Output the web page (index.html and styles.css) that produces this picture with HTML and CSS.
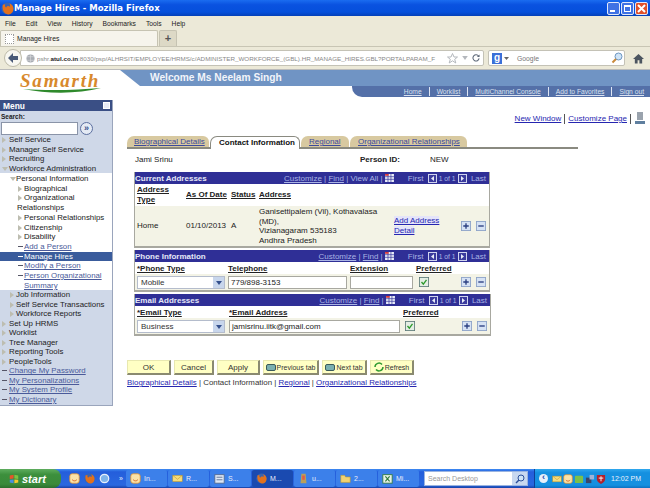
FILE: index.html
```html
<!DOCTYPE html>
<html lang="en">
<head>
    <meta charset="UTF-8">
    <title>Manage Hires - Mozilla Firefox</title>
    <link rel="stylesheet" href="styles.css">
</head>
<body>
<svg class="defs" width="0" height="0">
    <symbol id="fox" viewBox="0 0 14 14">
        <circle cx="7" cy="7" r="6.5" fill="#3a64b0"/>
        <path d="M2 3C1 8 3 13 8 13.4C12 13.4 14 9.5 13.3 6C12.8 3.5 11 2 9 1.5C10 3 10 4 9.5 5C8 3.8 6 4.5 5.5 6C4.5 5.5 4 4 4.5 2.5C3.5 2.8 2.5 3 2 3Z" fill="#e2711d"/>
    </symbol>
    <symbol id="smile" viewBox="0 0 14 14">
        <rect x="1" y="1" width="12" height="12" rx="3" fill="#fbe3a8" stroke="#e0902c"/>
        <path d="M4 8.5C5.5 10.5 8.5 10.5 10 8.5" fill="none" stroke="#d9661f" stroke-width="1.2"/>
    </symbol>
    <symbol id="plus" viewBox="0 0 11 11">
        <rect x="0.5" y="0.5" width="10" height="10" fill="#d6e2f4" stroke="#8ea4c8"/>
        <path d="M2.5 5.5H8.5M5.5 2.5V8.5" stroke="#2b3f80" stroke-width="1.5"/>
    </symbol>
    <symbol id="minus" viewBox="0 0 11 11">
        <rect x="0.5" y="0.5" width="10" height="10" fill="#d6e2f4" stroke="#8ea4c8"/>
        <path d="M2.5 5.5H8.5" stroke="#2b3f80" stroke-width="1.5"/>
    </symbol>
    <symbol id="prev" viewBox="0 0 9 9">
        <rect x="0.5" y="0.5" width="8" height="8" fill="#3b3b9e" stroke="#d0d4ee"/>
        <path d="M6 2V7L3 4.5Z" fill="#e8ecf8"/>
    </symbol>
    <symbol id="next" viewBox="0 0 9 9">
        <rect x="0.5" y="0.5" width="8" height="8" fill="#3b3b9e" stroke="#d0d4ee"/>
        <path d="M3 2V7L6 4.5Z" fill="#e8ecf8"/>
    </symbol>
    <symbol id="sheet" viewBox="0 0 10 9">
        <rect width="10" height="9" fill="#e8ecf8"/>
        <path d="M0 3H10M0 6H10M3.3 0V9M6.6 0V9" stroke="#3b3b9e" stroke-width="0.8"/>
        <rect width="4" height="2" fill="#d83a3a"/>
    </symbol>
    <symbol id="check" viewBox="0 0 12 12">
        <rect x="0.5" y="0.5" width="11" height="11" fill="#e4eee4" stroke="#5c7a78"/>
        <path d="M3 6L5.2 8.5L9 3.5" fill="none" stroke="#2c9a2c" stroke-width="1.6"/>
    </symbol>
    <symbol id="folder" viewBox="0 0 14 14">
        <path d="M1 3H6L7 5H13V12H1Z" fill="#f1d271" stroke="#b8962e" stroke-width="0.7"/>
    </symbol>
    <symbol id="mail" viewBox="0 0 14 14">
        <rect x="1" y="3" width="12" height="8" fill="#f7dc7c" stroke="#b8962e" stroke-width="0.7"/>
        <path d="M1 3L7 8L13 3" fill="none" stroke="#b8962e" stroke-width="0.7"/>
    </symbol>
</svg>

<div class="titlebar">
    <svg class="title-icon" width="13" height="13"><use href="#fox"/></svg>
    <span class="title-text">Manage Hires - Mozilla Firefox</span>
    <div class="win-btns">
        <span class="win-btn"><i class="win-min"></i></span>
        <span class="win-btn"><i class="win-max"></i></span>
        <span class="win-btn win-close">
            <svg width="9" height="9" viewBox="0 0 9 9"><path d="M1 1L8 8M8 1L1 8" stroke="#fff" stroke-width="2"/></svg>
        </span>
    </div>
</div>

<div class="menubar">
    <span>File</span><span>Edit</span><span>View</span><span>History</span><span>Bookmarks</span><span>Tools</span><span>Help</span>
</div>

<div class="tabstrip">
    <div class="ff-tab"><i class="ff-favicon"></i>Manage Hires</div>
    <div class="ff-newtab">+</div>
</div>

<div class="navbar">
    <span class="back-btn">
        <svg width="12" height="12" viewBox="0 0 12 12"><path d="M6 1L1 6L6 11V8H11V4H6Z" fill="#4a5a78"/></svg>
    </span>
    <div class="urlbar">
        <svg class="globe" width="9" height="9" viewBox="0 0 10 10"><circle cx="5" cy="5" r="4.5" fill="#a9adb3"/><path d="M1 3H9M1 7H9M5 .5V9.5" stroke="#d7d9dc" stroke-width="0.7"/></svg>
        <span class="url"><span class="url-dim">pshr.</span><b>atul.co.in</b><span class="url-dim">:8030/psp/ALHRSIT/EMPLOYEE/HRMS/c/ADMINISTER_WORKFORCE_(GBL).HR_MANAGE_HIRES.GBL?PORTALPARAM_F</span></span>
        <span class="url-tools">
            <svg width="11" height="11" viewBox="0 0 11 11"><path d="M5.5 .5L7 4H10.5L7.7 6.3L8.8 10L5.5 7.8L2.2 10L3.3 6.3L.5 4H4Z" fill="none" stroke="#b4b8bd"/></svg>
            <svg width="6" height="4" viewBox="0 0 7 5"><path d="M0 0H7L3.5 5Z" fill="#b4b8bd"/></svg>
            <svg width="8" height="8" viewBox="0 0 9 9"><path d="M7.5 2.5A3.5 3.5 0 1 0 8 5" fill="none" stroke="#5d6878" stroke-width="1.2"/><path d="M8.5 .5V3.5H5.5Z" fill="#5d6878"/></svg>
        </span>
    </div>
    <div class="searchbar">
        <span class="g-icon">g</span>
        <svg width="5" height="3" viewBox="0 0 5 3"><path d="M0 0H5L2.5 3Z" fill="#666"/></svg>
        <span class="search-text">Google</span>
        <svg class="lens" width="12" height="12" viewBox="0 0 12 12"><circle cx="7.5" cy="4.5" r="3.5" fill="#cfe4f7" stroke="#6d96c2"/><path d="M5 7L1.5 10.5" stroke="#c98a3a" stroke-width="2"/></svg>
    </div>
    <svg class="home" width="11" height="11" viewBox="0 0 12 12"><path d="M6 1L0 6.5H2V11.5H5V8H7V11.5H10V6.5H12Z" fill="#4c5560"/></svg>
</div>

<div class="portal">
    <div class="banner">
        <div class="logo">
            <span class="logo-name">Samarth</span>
            <svg class="logo-swoosh" width="78" height="6" viewBox="0 0 78 6"><path d="M0 1C25 6 55 6 78 0C55 2 25 3 0 1Z" fill="#2f8a2c"/></svg>
        </div>
        <div class="banner-right">
            <div class="welcome">Welcome Ms Neelam Singh</div>
            <div class="toplinks">
                <a>Home</a><i></i><a>Worklist</a><i></i><a>MultiChannel Console</a><i></i><a>Add to Favorites</a><i></i><a>Sign out</a>
            </div>
        </div>
    </div>

    <div class="portal-body">
        <div class="side">
            <div class="side-head">Menu<i class="side-close"></i></div>
            <div class="side-search">
                <b>Search:</b>
                <div class="search-row"><span class="side-input"></span><span class="go-btn">&raquo;</span></div>
            </div>
            <ul class="tree">
                <li class="closed">Self Service</li>
                <li class="closed">Manager Self Service</li>
                <li class="closed">Recruiting</li>
                <li class="open">Workforce Administration</li>
            </ul>
            <ul class="tree sub">
                <li class="open lv1">Personal Information</li>
                <li class="closed lv2">Biographical</li>
                <li class="closed lv2 hang">Organizational<br>Relationships</li>
                <li class="closed lv2">Personal Relationships</li>
                <li class="closed lv2">Citizenship</li>
                <li class="closed lv2">Disability</li>
                <li class="leaf lv2"><a>Add a Person</a></li>
                <li class="leaf lv2 current">Manage Hires</li>
                <li class="leaf lv2"><a>Modify a Person</a></li>
                <li class="leaf lv2"><a>Person Organizational<br>Summary</a></li>
            </ul>
            <ul class="tree">
                <li class="closed lv1">Job Information</li>
                <li class="closed lv1">Self Service Transactions</li>
                <li class="closed lv1">Workforce Reports</li>
                <li class="closed">Set Up HRMS</li>
                <li class="closed">Worklist</li>
                <li class="closed">Tree Manager</li>
                <li class="closed">Reporting Tools</li>
                <li class="closed">PeopleTools</li>
                <li class="leaf"><a>Change My Password</a></li>
                <li class="leaf"><a>My Personalizations</a></li>
                <li class="leaf"><a>My System Profile</a></li>
                <li class="leaf"><a>My Dictionary</a></li>
            </ul>
        </div>

        <div class="content">
            <div class="page-links">
                <a>New Window</a><i></i><a>Customize Page</a><i></i>
                <svg width="10" height="13" viewBox="0 0 10 13"><rect x="2" y="0" width="6" height="8" fill="#9aa3ad"/><rect x="0" y="9" width="10" height="3" fill="#5f7f9f"/></svg>
            </div>

            <div class="tabs">
                <span class="tab tab-first"><a>Biographical Details</a></span>
                <span class="tab tab-on">Contact Information</span>
                <span class="tab tab-reg"><a>Regional</a></span>
                <span class="tab tab-org"><a>Organizational Relationships</a></span>
            </div>

            <div class="person">
                <span class="person-name">Jami Srinu</span>
                <b class="person-label">Person ID:</b>
                <span>NEW</span>
            </div>

            <div class="grid grid-addr">
                <div class="grid-head">
                    <b>Current Addresses</b>
                    <span class="grid-nav"><a>Customize</a> | <a>Find</a> | View All | <svg width="9" height="8"><use href="#sheet"/></svg>
                        <span class="pager">First <svg width="9" height="9"><use href="#prev"/></svg> <small>1 of 1</small> <svg width="9" height="9"><use href="#next"/></svg> Last</span></span>
                </div>
                <div class="addr-labels">
                    <b class="col-type">Address<br>Type</b>
                    <b class="col-date">As Of Date</b>
                    <b class="col-status">Status</b>
                    <b class="col-addr">Address</b>
                </div>
                <div class="addr-row">
                    <span class="col-type">Home</span>
                    <span class="col-date">01/10/2013</span>
                    <span class="col-status">A</span>
                    <span class="col-addr">Ganisettipalem (Vil), Kothavalasa (MD),<br>Vizianagaram 535183<br>Andhra Pradesh</span>
                    <span class="addr-detail"><a>Add Address Detail</a></span>
                    <span class="row-btns"><svg width="10" height="10"><use href="#plus"/></svg><svg width="10" height="10"><use href="#minus"/></svg></span>
                </div>
            </div>

            <div class="grid grid-phone">
                <div class="grid-head">
                    <b>Phone Information</b>
                    <span class="grid-nav"><a>Customize</a> | <a>Find</a> | <svg width="9" height="8"><use href="#sheet"/></svg>
                        <span class="pager">First <svg width="9" height="9"><use href="#prev"/></svg> <small>1 of 1</small> <svg width="9" height="9"><use href="#next"/></svg> Last</span></span>
                </div>
                <div class="form-labels">
                    <b class="w-type">*Phone Type</b>
                    <b class="w-tel">Telephone</b>
                    <b class="w-ext">Extension</b>
                    <b>Preferred</b>
                </div>
                <div class="form-row">
                    <span class="w-type"><span class="select">Mobile<i class="select-arrow"></i></span></span>
                    <span class="w-tel"><span class="input">779/898-3153</span></span>
                    <span class="w-ext"><span class="input"></span></span>
                    <svg class="check check-phone" width="10" height="10"><use href="#check"/></svg>
                    <span class="row-btns"><svg width="10" height="10"><use href="#plus"/></svg><svg width="10" height="10"><use href="#minus"/></svg></span>
                </div>
            </div>

            <div class="grid grid-email">
                <div class="grid-head">
                    <b>Email Addresses</b>
                    <span class="grid-nav"><a>Customize</a> | <a>Find</a> | <svg width="9" height="8"><use href="#sheet"/></svg>
                        <span class="pager">First <svg width="9" height="9"><use href="#prev"/></svg> <small>1 of 1</small> <svg width="9" height="9"><use href="#next"/></svg> Last</span></span>
                </div>
                <div class="form-labels">
                    <b class="w-type2">*Email Type</b>
                    <b class="w-mail">*Email Address</b>
                    <b>Preferred</b>
                </div>
                <div class="form-row">
                    <span class="w-type2"><span class="select">Business<i class="select-arrow"></i></span></span>
                    <span class="w-mail"><span class="input">jamisrinu.iitk@gmail.com</span></span>
                    <svg class="check check-email" width="10" height="10"><use href="#check"/></svg>
                    <span class="row-btns"><svg width="10" height="10"><use href="#plus"/></svg><svg width="10" height="10"><use href="#minus"/></svg></span>
                </div>
            </div>

            <div class="actions">
                <span class="btn btn-ok">OK</span>
                <span class="btn btn-cancel">Cancel</span>
                <span class="btn btn-apply">Apply</span>
                <span class="btn btn-small btn-prev"><i class="btn-ico"></i>Previous tab</span>
                <span class="btn btn-small btn-next"><i class="btn-ico"></i>Next tab</span>
                <span class="btn btn-small btn-refresh">
                    <svg width="10" height="10" viewBox="0 0 10 10"><path d="M1 5A4 4 0 0 1 8 2.5M9 5A4 4 0 0 1 2 7.5" fill="none" stroke="#2f9a2f" stroke-width="1.5"/></svg>Refresh</span>
            </div>

            <div class="bottom-links">
                <a>Biographical Details</a> | <span>Contact Information</span> | <a>Regional</a> | <a>Organizational Relationships</a>
            </div>
        </div>
    </div>
</div>

<div class="taskbar">
    <div class="start">
        <svg width="10" height="10" viewBox="0 0 13 13"><path d="M1 2L6 1V6L1 6.5Z" fill="#e8542a"/><path d="M7 1L12 2V6.5L7 6Z" fill="#7fc241"/><path d="M1 7.5L6 7V12L1 11Z" fill="#4a8fe0"/><path d="M7 7L12 7.5V11L7 12Z" fill="#f5c92e"/></svg>
        <span>start</span>
    </div>
    <div class="quick">
        <svg width="11" height="11"><use href="#smile"/></svg>
        <svg width="11" height="11"><use href="#fox"/></svg>
        <svg width="11" height="11" viewBox="0 0 13 13"><circle cx="6.5" cy="6.5" r="5" fill="#7fb5ea" stroke="#e8f0fa" stroke-width="1.5"/></svg>
        <small>&raquo;</small>
    </div>
    <div class="task"><svg width="11" height="11"><use href="#smile"/></svg>In...</div>
    <div class="task"><svg width="11" height="11"><use href="#mail"/></svg>R...</div>
    <div class="task"><svg width="11" height="11" viewBox="0 0 13 13"><rect x="1" y="2" width="11" height="10" fill="#dfe8f5" stroke="#54688c"/><path d="M3 5H10M3 8H10" stroke="#54688c"/></svg>S...</div>
    <div class="task task-on"><svg width="11" height="11"><use href="#fox"/></svg>M...</div>
    <div class="task"><svg width="11" height="11" viewBox="0 0 13 13"><path d="M4 1H9L10 12H3Z" fill="#b9a05a"/><rect x="5" y="3" width="3" height="5" fill="#e25b4a"/></svg>u...</div>
    <div class="task"><svg width="11" height="11"><use href="#folder"/></svg>2...</div>
    <div class="task"><svg width="11" height="11" viewBox="0 0 13 13"><rect x="1" y="2" width="11" height="10" fill="#e6f2e6" stroke="#2f7a3a"/><path d="M4 4L9 10M9 4L4 10" stroke="#2f7a3a" stroke-width="1.3"/></svg>Mi...</div>
    <div class="desk-search">
        <span>Search Desktop</span>
        <span class="desk-go"><svg width="10" height="10" viewBox="0 0 10 10"><circle cx="6" cy="4" r="3" fill="#cfe4f7" stroke="#2c4f9a"/><path d="M4 6L1 9" stroke="#2c4f9a" stroke-width="1.5"/></svg></span>
    </div>
    <div class="tray">
        <span class="tray-arrow">&lsaquo;</span>
        <svg width="10" height="10"><use href="#mail"/></svg>
        <svg width="10" height="10"><use href="#smile"/></svg>
        <svg width="10" height="10" viewBox="0 0 11 11"><rect x="1" y="2" width="9" height="8" rx="1" fill="#7cc04a"/></svg>
        <svg width="10" height="10" viewBox="0 0 11 11"><rect x="1" y="4" width="6" height="6" fill="#39466a"/><rect x="5" y="1" width="5" height="5" fill="#9fb2d8"/></svg>
        <svg width="10" height="10" viewBox="0 0 11 11"><path d="M1 1H10V6C10 8.5 7 10 5.5 11C4 10 1 8.5 1 6Z" fill="#b5202a"/><path d="M5.5 2.5V8M3 4.5H8" stroke="#fff"/></svg>
        <span class="clock">12:02 PM</span>
    </div>
</div>
</body>
</html>
```

FILE: styles.css
```css
html, body {
    margin: 0;
    padding: 0;
}
body {
    width: 650px;
    height: 488px;
    overflow: hidden;
    display: flex;
    flex-direction: column;
    background: #fff;
    font-family: "Liberation Sans", Arial, sans-serif;
    font-size: 8px;
    color: #222;
}
a {
    color: #3b3bb0;
    text-decoration: underline;
}
i {
    font-style: normal;
}
.defs {
    display: none;
}

/* window chrome */
.titlebar {
    height: 16px;
    display: flex;
    align-items: center;
    padding-left: 1px;
    background: linear-gradient(#1a6cf0, #0a52e0 30%, #0550dc 75%, #0440b8);
}
.title-text {
    color: #fff;
    font-family: "DejaVu Sans", sans-serif;
    font-size: 8.5px;
    font-weight: bold;
}
.win-btns {
    margin-left: auto;
    padding-right: 2px;
    display: flex;
    gap: 1px;
}
.win-btn {
    width: 11px;
    height: 11px;
    border: 1px solid #e0e8fa;
    border-radius: 2px;
    background: #3f72e4;
    display: flex;
    align-items: center;
    justify-content: center;
}
.win-close {
    background: #e0502a;
}
.win-min {
    width: 5px;
    height: 2px;
    margin-top: 6px;
    margin-right: 3px;
    background: #fff;
}
.win-max {
    width: 5px;
    height: 4px;
    border: 1px solid #fff;
    border-top-width: 2px;
}
.menubar {
    height: 14px;
    display: flex;
    align-items: center;
    padding-left: 5px;
    gap: 10px;
    background: #ece9d8;
    font-size: 6.7px;
    color: #222;
}
.tabstrip {
    height: 16px;
    display: flex;
    gap: 1px;
    background: #ece9d8;
    border-bottom: 1px solid #c8c5b4;
}
.ff-tab {
    width: 158px;
    display: flex;
    align-items: center;
    gap: 3px;
    padding-left: 4px;
    box-sizing: border-box;
    background: #f6f4ec;
    border: 1px solid #c6c3b2;
    border-bottom: none;
    border-radius: 2px 2px 0 0;
    font-size: 6.8px;
}
.ff-favicon {
    width: 7px;
    height: 8px;
    border: 1px dotted #999;
    background: #fff;
}
.ff-newtab {
    width: 16px;
    text-align: center;
    background: #ddd9c6;
    border: 1px solid #c6c3b2;
    border-bottom: none;
    border-radius: 2px 2px 0 0;
    font-size: 11px;
    font-weight: bold;
    line-height: 14px;
    color: #555;
}
.navbar {
    height: 22px;
    display: flex;
    align-items: center;
    background: #ece9d8;
    padding-left: 4px;
    border-bottom: 1px solid #bbb;
}
.back-btn {
    width: 16px;
    height: 16px;
    display: flex;
    align-items: center;
    justify-content: center;
    border-radius: 50%;
    background: #f8f7f1;
    border: 1px solid #bdbaa9;
    z-index: 1;
}
.urlbar {
    width: 464px;
    height: 16px;
    margin-left: -2px;
    padding-left: 5px;
    box-sizing: border-box;
    display: flex;
    align-items: center;
    background: #fff;
    border: 1px solid #c4c2b6;
    border-radius: 0 2px 2px 0;
    overflow: hidden;
}
.globe {
    flex: none;
    margin-right: 2px;
}
.url {
    flex: 1;
    overflow: hidden;
    white-space: nowrap;
    font-size: 6.25px;
    color: #222;
    margin-right: 2px;
}
.url-dim {
    color: #888;
}
.url-tools {
    flex: none;
    display: flex;
    align-items: center;
    gap: 4px;
    padding-right: 3px;
}
.searchbar {
    width: 137px;
    height: 16px;
    margin-left: 4px;
    padding-left: 3px;
    box-sizing: border-box;
    display: flex;
    align-items: center;
    gap: 2px;
    background: #fff;
    border: 1px solid #c4c2b6;
    border-radius: 2px;
}
.g-icon {
    width: 10px;
    height: 11px;
    background: #3a6fd8;
    color: #fff;
    text-align: center;
    font-size: 10px;
    line-height: 9px;
    font-weight: bold;
}
.search-text {
    margin-left: 6px;
    font-size: 6.8px;
    color: #777;
}
.lens {
    margin-left: auto;
    margin-right: 1px;
}
.home {
    margin-left: 8px;
}

/* portal header */
.portal {
    flex: 1;
    display: flex;
    flex-direction: column;
    min-height: 0;
}
.banner {
    height: 30px;
    flex: none;
    display: flex;
}
.logo {
    width: 120px;
    flex: none;
    padding: 3px 0 0 20px;
    box-sizing: border-box;
    display: flex;
    flex-direction: column;
}
.logo-name {
    font-family: "Liberation Serif", serif;
    font-style: italic;
    font-weight: bold;
    font-size: 19px;
    line-height: 15px;
    letter-spacing: 1.8px;
    color: #d8892c;
}
.logo-swoosh {
    margin-left: 3px;
}
.banner-right {
    flex: 1;
    display: flex;
    flex-direction: column;
}
.welcome {
    height: 16px;
    padding-left: 30px;
    background: #7094c4;
    clip-path: polygon(0 0, 100% 0, 100% 100%, 20px 100%);
    color: #f2f5fa;
    font-size: 10.2px;
    font-weight: bold;
    line-height: 15px;
}
.toplinks {
    height: 11px;
    margin-left: 232px;
    padding-right: 6px;
    display: flex;
    align-items: center;
    justify-content: flex-end;
    background: #5470a8;
    border-radius: 0 0 0 10px;
    font-size: 6.7px;
}
.toplinks a {
    color: #dbe2f0;
}
.toplinks i {
    width: 1px;
    height: 9px;
    margin: 0 7px;
    background: #dfe6f4;
}
.portal-body {
    flex: 1;
    display: flex;
    min-height: 0;
}

/* left menu */
.side {
    width: 113px;
    height: 306px;
    flex: none;
    box-sizing: border-box;
    background: #cfd8e8;
    border-right: 1px solid #9aa5bc;
    border-bottom: 1px solid #9aa5bc;
    font-size: 7.85px;
    color: #222;
}
.side-head {
    height: 11px;
    padding: 0 2px 0 3px;
    display: flex;
    align-items: center;
    justify-content: space-between;
    background: #3a4f85;
    color: #fff;
    font-size: 8.4px;
    font-weight: bold;
}
.side-close {
    width: 5px;
    height: 5px;
    background: #e8ecf6;
    border: 1px solid #fff;
}
.side-search b {
    display: block;
    font-size: 6.5px;
    line-height: 9px;
    padding: 1px 0 0 1px;
}
.search-row {
    display: flex;
    align-items: center;
    gap: 2px;
    padding-left: 1px;
    height: 14px;
}
.side-input {
    width: 77px;
    height: 13px;
    box-sizing: border-box;
    background: #fff;
    border: 1px solid #8a94a8;
}
.go-btn {
    width: 11px;
    height: 11px;
    border-radius: 50%;
    border: 1px solid #5b6f9f;
    background: #e4eaf4;
    color: #34508c;
    text-align: center;
    font-size: 9px;
    font-weight: bold;
    line-height: 10px;
}
.tree {
    list-style: none;
    margin: 0;
    padding: 0;
}
.tree li {
    position: relative;
    padding-left: 9px;
    line-height: 9.5px;
    white-space: nowrap;
}
.tree li::before {
    content: "";
    position: absolute;
    left: 2px;
    top: 2px;
}
.tree li.closed::before {
    border-left: 4px solid #bdbdb0;
    border-top: 3px solid transparent;
    border-bottom: 3px solid transparent;
}
.tree li.open::before {
    top: 3px;
    border-top: 4px solid #bdbdb0;
    border-left: 3px solid transparent;
    border-right: 3px solid transparent;
}
.tree li.leaf::before {
    top: 4px;
    width: 5px;
    height: 1px;
    background: #556;
}
.tree .lv1 {
    padding-left: 16px;
}
.tree .lv1::before {
    left: 10px;
}
.tree .lv2 {
    padding-left: 24px;
}
.tree .lv2::before {
    left: 18px;
}
/* second line of this one wraps back under the arrow */
.tree .lv2.hang {
    padding-left: 17px;
    text-indent: 7px;
}
.sub {
    background: #fff;
    padding-top: 1px;
}
.sub li {
    line-height: 9.7px;
}
.tree li.current {
    background: #3a5c9c;
    color: #fff;
}
.tree li.current::before {
    background: #fff;
}
.tree a {
    color: #4a5a9a;
}

/* content area */
.content {
    flex: 1;
    padding-left: 14px;
    min-width: 0;
}
.page-links {
    height: 13px;
    margin-top: 12px;
    padding-right: 5px;
    display: flex;
    align-items: center;
    justify-content: flex-end;
}
.page-links a {
    color: #2626b0;
}
.page-links i {
    width: 1px;
    height: 10px;
    margin: 0 3px;
    background: #555;
}
.page-links svg {
    margin-left: 1px;
}
.tabs {
    width: 451px;
    height: 12px;
    margin-top: 10px;
    display: flex;
    align-items: flex-end;
    gap: 1px;
    border-bottom: 2px solid #8a8a80;
}
.tab {
    height: 11px;
    box-sizing: border-box;
    line-height: 11px;
    background: #d8c9a0;
    border-radius: 7px 6px 0 0;
    white-space: nowrap;
}
.tab a {
    color: #3b4a9c;
}
.tab-first {
    width: 82px;
    padding-left: 7px;
}
.tab-on {
    width: 90px;
    height: 13px;
    margin-bottom: -2px;
    padding-left: 8px;
    background: #fff;
    border: 1px solid #8a8a80;
    border-bottom: none;
    font-weight: bold;
    color: #111;
}
.tab-reg {
    width: 48px;
    padding-left: 8px;
}
.tab-org {
    width: 117px;
    padding-left: 8px;
}
.person {
    display: flex;
    height: 12px;
    margin-top: 5px;
    padding-left: 8px;
    line-height: 12px;
}
.person-name {
    width: 225px;
}
.person-label {
    width: 70px;
}
.grid {
    width: 356px;
    margin-left: 7px;
    box-sizing: border-box;
    border: 1px solid #a8a8a0;
    border-top: none;
    border-bottom-width: 2px;
}
.grid-addr {
    margin-top: 6px;
}
.grid-phone {
    margin-top: 2px;
}
.grid-email {
    width: 357px;
    margin-top: 2px;
}
.grid-head {
    height: 12px;
    padding-right: 3px;
    display: flex;
    align-items: center;
    justify-content: space-between;
    background: #2f2f96;
    color: #dfe2f6;
}
.grid-head b {
    color: #e6e8f8;
}
.grid-nav {
    display: flex;
    align-items: center;
    color: #aab4e4;
    white-space: pre;
}
.grid-nav a {
    color: #aab4e4;
}
.pager {
    display: flex;
    align-items: center;
    gap: 2px;
    margin-left: 14px;
}
.pager small {
    font-size: 6.8px;
}
.addr-labels {
    height: 22px;
    display: flex;
    align-items: center;
    background: #fff;
}
.addr-labels b {
    text-decoration: underline;
    line-height: 10px;
}
.addr-row {
    height: 40px;
    display: flex;
    align-items: center;
    background: #f3f3e6;
}
.addr-row span {
    line-height: 9.5px;
}
.col-type {
    width: 51px;
    padding-left: 2px;
    box-sizing: border-box;
}
.col-date {
    width: 45px;
}
.col-status {
    width: 28px;
}
.col-addr {
    width: 135px;
    padding-right: 12px;
    box-sizing: border-box;
}
.addr-detail {
    width: 48px;
}
.addr-row .addr-detail {
    line-height: 10px;
}
.addr-detail a {
    color: #2626b0;
    background: #e4e4fa;
}
.row-btns {
    margin-left: auto;
    margin-right: 3px;
    display: flex;
    gap: 5px;
}
.form-labels {
    height: 12px;
    display: flex;
    align-items: center;
    background: #fff;
    padding-left: 2px;
}
.form-labels b {
    text-decoration: underline;
}
.form-row {
    height: 16px;
    display: flex;
    align-items: center;
    background: #f3f3e6;
    padding-left: 2px;
}
.w-type {
    width: 91px;
    flex: none;
}
.w-type2 {
    width: 92px;
    flex: none;
}
.w-tel {
    width: 122px;
    flex: none;
}
.w-ext {
    width: 66px;
    flex: none;
}
.w-mail {
    width: 174px;
    flex: none;
}
.select {
    width: 88px;
    height: 13px;
    padding-left: 3px;
    box-sizing: border-box;
    display: flex;
    align-items: center;
    justify-content: space-between;
    background: #fff;
    border: 1px solid #b4bccc;
    color: #333;
}
.select-arrow {
    width: 11px;
    height: 11px;
    background: #c8d6ec;
    position: relative;
}
.select-arrow::after {
    content: "";
    position: absolute;
    left: 3px;
    top: 4px;
    border-top: 4px solid #34508c;
    border-left: 3px solid transparent;
    border-right: 3px solid transparent;
}
.input {
    display: block;
    height: 13px;
    margin-right: 3px;
    padding-left: 2px;
    box-sizing: border-box;
    background: #fff;
    border: 1px solid #a8a8a0;
    line-height: 11px;
}
.check {
    flex: none;
}
.check-phone {
    margin-left: 3px;
}
.check-email {
    margin-left: 2px;
}

/* buttons under the grids */
.actions {
    display: flex;
    gap: 3px;
    margin-top: 24px;
}
.btn {
    height: 15px;
    box-sizing: border-box;
    display: flex;
    align-items: center;
    justify-content: center;
    gap: 1px;
    background: #ffffc4;
    border-right: 2px solid #8a8a70;
    border-bottom: 2px solid #8a8a70;
    border-left: 1px solid #e8e8b0;
    border-top: 1px solid #e8e8b0;
    color: #333;
}
.btn-ok { width: 44px; }
.btn-cancel { width: 40px; }
.btn-apply { width: 43px; }
.btn-small { font-size: 7px; }
.btn-prev { width: 56px; }
.btn-next { width: 45px; }
.btn-refresh { width: 44px; }
.btn-ico {
    width: 10px;
    height: 7px;
    background: #7ab0b0;
    border: 1px solid #3a5a5a;
    box-sizing: border-box;
    border-radius: 2px;
}
.bottom-links {
    margin-top: 3px;
    font-size: 7.9px;
    color: #333;
}
.bottom-links a {
    color: #2626b0;
}

/* xp taskbar */
.taskbar {
    height: 19px;
    flex: none;
    display: flex;
    align-items: center;
    background: linear-gradient(#3f8cf3, #245edb 15%, #2a68e0 85%, #1941a5);
    color: #e8eefa;
    font-size: 7px;
}
.start {
    width: 61px;
    height: 19px;
    flex: none;
    box-sizing: border-box;
    display: flex;
    align-items: center;
    gap: 3px;
    padding-left: 9px;
    background: linear-gradient(#5ead5e, #3c8f3c 30%, #3a8a3a 80%, #2c6e2c);
    border-radius: 0 8px 8px 0;
    color: #fff;
    font-style: italic;
    font-weight: bold;
    font-size: 11px;
}
.quick {
    width: 65px;
    padding-left: 8px;
    box-sizing: border-box;
    display: flex;
    align-items: center;
    gap: 4px;
    flex: none;
}
.quick small {
    font-size: 7px;
    margin-left: 5px;
}
.task {
    width: 41px;
    height: 17px;
    margin-right: 1px;
    padding-left: 4px;
    box-sizing: border-box;
    flex: none;
    display: flex;
    align-items: center;
    gap: 3px;
    background: #3c80ea;
    border-radius: 2px;
}
.task-on {
    background: #1a4ab0;
}
.desk-search {
    width: 104px;
    height: 15px;
    margin-left: 4px;
    padding-left: 3px;
    box-sizing: border-box;
    flex: none;
    display: flex;
    align-items: center;
    justify-content: space-between;
    background: #fff;
    border: 1px solid #9ab4e0;
    color: #999;
}
.desk-go {
    width: 15px;
    height: 13px;
    display: flex;
    align-items: center;
    justify-content: center;
    background: #c8d8f0;
}
.tray {
    height: 19px;
    margin-left: auto;
    padding: 0 9px 0 4px;
    display: flex;
    align-items: center;
    gap: 1px;
    background: linear-gradient(#30a8ee, #1590e0 20%, #1590e0 85%, #0e70c0);
    border-left: 1px solid #0f3f98;
}
.tray-arrow {
    width: 9px;
    height: 9px;
    margin-right: 3px;
    border-radius: 50%;
    background: #e8f0fa;
    color: #1a4ab0;
    text-align: center;
    font-size: 9px;
    line-height: 7px;
    font-weight: bold;
}
.clock {
    margin-left: 4px;
    color: #eaf2fb;
}
```
